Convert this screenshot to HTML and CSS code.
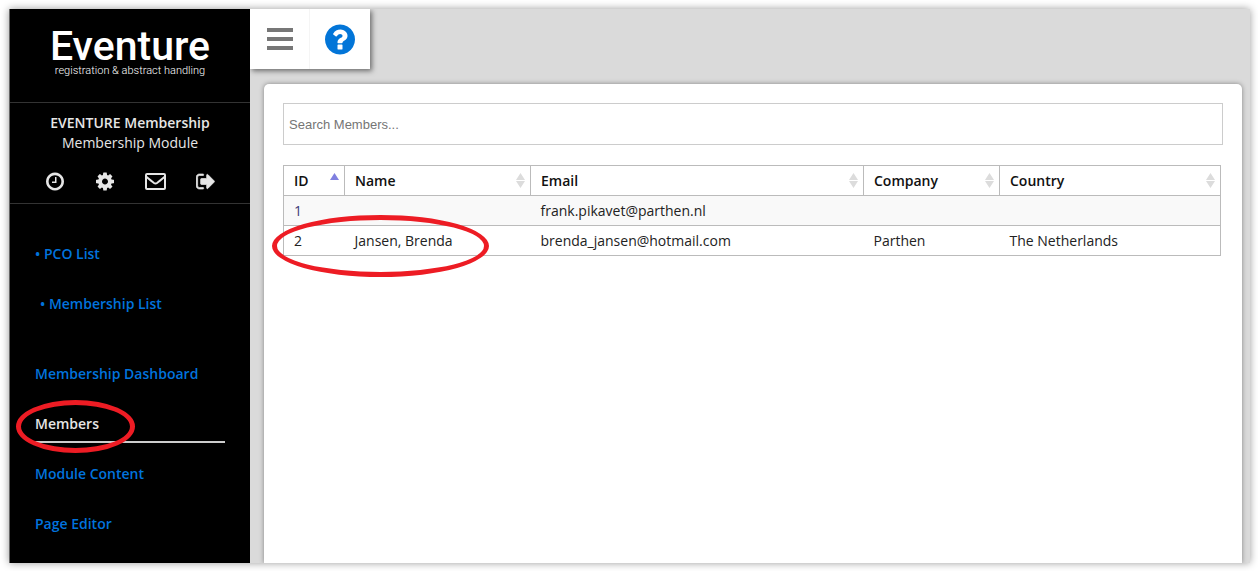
FILE: index.html
```html
<!DOCTYPE html>
<html lang="en">
<head>
  <meta charset="utf-8">
  <title>Eventure - Members</title>
  <link rel="stylesheet" href="styles.css">
</head>
<body>
  <div class="frame">
    <aside class="sidebar">
      <div class="logo">
        <span class="logo-name">Eventure</span>
        <span class="logo-sub">registration &amp; abstract handling</span>
      </div>
      <div class="account">
        <strong>EVENTURE Membership</strong>
        <span>Membership Module</span>
        <div class="account-icons">
          <button type="button" aria-label="History"><svg width="18" height="21" viewBox="0 0 1536 1792"><path d="M896 544v448q0 14-9 23t-23 9h-320q-14 0-23-9t-9-23v-64q0-14 9-23t23-9h224v-352q0-14 9-23t23-9h64q14 0 23 9t9 23zm416 352q0-148-73-273t-198-198-273-73-273 73-198 198-73 273 73 273 198 198 273 73 273-73 198-198 73-273zm224 0q0 209-103 385.5t-279.5 279.5-385.5 103-385.5-103-279.5-279.5-103-385.5 103-385.5 279.5-279.5 385.5-103 385.5 103 279.5 279.5 103 385.5z"/></svg></button>
          <button type="button" aria-label="Settings"><svg width="18" height="21" viewBox="0 0 1536 1792"><path d="M1024 896q0-106-75-181t-181-75-181 75-75 181 75 181 181 75 181-75 75-181zm512-109v222q0 12-8 23t-20 13l-185 28q-19 54-39 91 35 50 107 138 10 12 10 25t-9 23q-27 37-99 108t-94 71q-12 0-26-9l-138-108q-44 23-91 38-16 136-29 186-7 28-36 28h-222q-14 0-24.5-8.5t-11.5-21.5l-28-184q-49-16-90-37l-141 107q-10 9-25 9-14 0-25-11-126-114-165-168-7-10-7-23 0-12 8-23 15-21 51-66.5t54-70.5q-27-50-41-99l-183-27q-13-2-21-12.5t-8-23.5v-222q0-12 8-23t19-13l186-28q14-46 39-92-40-57-107-138-10-12-10-24 0-10 9-23 26-36 98.5-107.5t94.5-71.5q13 0 26 10l138 107q44-23 91-38 16-136 29-186 7-28 36-28h222q14 0 24.5 8.5t11.5 21.5l28 184q49 16 90 37l142-107q9-9 24-9 13 0 25 10 129 119 165 170 7 8 7 22 0 12-8 23-15 21-51 66.5t-54 70.5q26 50 41 98l183 28q13 2 21 12.5t8 23.5z"/></svg></button>
          <button type="button" aria-label="Messages"><svg class="line-icon" width="21" height="17" viewBox="0 0 21 17"><rect x="1" y="1" width="19" height="15" rx="1"/><path d="M1 3.5C4 6 7 8.500 9 10q1.500 1 3 0C14 8.500 17 6 20 3.500"/></svg></button>
          <button type="button" aria-label="Sign out"><svg class="sign-out" width="19" height="21" viewBox="0 0 1600 1792"><path d="M640 1440q0 4 1 20t.5 26.5-3 23.5-10 19.5-20.5 6.5h-320q-119 0-203.500-84.500t-84.500-203.500v-704q0-119 84.500-203.500t203.500-84.500h320q13 0 22.500 9.500t9.500 22.500q0 4 1 20t.5 26.500-3 23.500-10 19.500-20.500 6.500h-320q-66 0-113 47t-47 113v704q0 66 47 113t113 47h312l11.500 1 11.500 3 8 5.500 7 9 2 13.500zm928-544q0 26-19 45l-544 544q-19 19-45 19t-45-19-19-45v-288h-448q-26 0-45-19t-19-45v-384q0-26 19-45t45-19h448v-288q0-26 19-45t45-19 45 19l544 544q19 19 19 45z"/></svg></button>
        </div>
      </div>
      <nav class="menu">
        <a href="#">• PCO List</a>
        <a class="sub" href="#">• Membership List</a>
        <a href="#">Membership Dashboard</a>
        <a class="active" href="#">Members<span class="mark mark-menu"></span></a>
        <a href="#">Module Content</a>
        <a href="#">Page Editor</a>
      </nav>
    </aside>

    <main class="content">
      <div class="tools">
        <button type="button" aria-label="Toggle menu"><svg class="bars" width="26" height="22" viewBox="0 0 26 22"><path d="M0 0h26v4H0zM0 9h26v4H0zM0 18h26v4H0z"/></svg></button>
        <button type="button" aria-label="Help"><svg class="help" width="30" height="35" viewBox="0 0 1536 1792"><path d="M896 1376v-192q0-14-9-23t-23-9h-192q-14 0-23 9t-9 23v192q0 14 9 23t23 9h192q14 0 23-9t9-23zm256-672q0-88-55.500-163t-138.500-116-170-41q-243 0-371 213-15 24 8 42l132 100q7 6 19 6 16 0 25-12 53-68 86-92 34-24 86-24 48 0 85.500 26t37.500 59q0 38-20 61t-68 45q-63 28-115.500 86.500t-52.500 125.500v36q0 14 9 23t23 9h192q14 0 23-9t9-23q0-19 21.500-49.500t54.500-49.500q32-18 49-28.500t46-35 44.500-48 28-60.500 12.500-81zm384 192q0 209-103 385.500t-279.500 279.500-385.500 103-385.500-103-279.500-279.500-103-385.500 103-385.500 279.500-279.500 385.500-103 385.500 103 279.500 279.500 103 385.500z"/></svg></button>
      </div>

      <section class="panel">
        <input class="search" type="text" placeholder="Search Members..." aria-label="Search Members">
        <div class="table-wrap">
          <table class="members">
            <colgroup>
              <col class="col-id">
              <col class="col-name">
              <col class="col-email">
              <col class="col-company">
              <col>
            </colgroup>
            <thead>
              <tr>
                <th><button type="button">ID <svg class="asc" width="9" height="15" viewBox="0 0 9 15"><path d="M4.500 0L9 7H0z"/></svg></button></th>
                <th><button type="button">Name <svg width="9" height="15" viewBox="0 0 9 15"><path d="M4.500 0L9 7H0zM0 8h9L4.500 15z"/></svg></button></th>
                <th><button type="button">Email <svg width="9" height="15" viewBox="0 0 9 15"><path d="M4.500 0L9 7H0zM0 8h9L4.500 15z"/></svg></button></th>
                <th><button type="button">Company <svg width="9" height="15" viewBox="0 0 9 15"><path d="M4.500 0L9 7H0zM0 8h9L4.500 15z"/></svg></button></th>
                <th><button type="button">Country <svg width="9" height="15" viewBox="0 0 9 15"><path d="M4.500 0L9 7H0zM0 8h9L4.500 15z"/></svg></button></th>
              </tr>
            </thead>
            <tbody>
              <tr>
                <td class="visited">1</td>
                <td></td>
                <td>frank.pikavet@parthen.nl</td>
                <td></td>
                <td></td>
              </tr>
              <tr>
                <td>2<span class="mark mark-row"></span></td>
                <td>Jansen, Brenda</td>
                <td>brenda_jansen@hotmail.com</td>
                <td>Parthen</td>
                <td>The Netherlands</td>
              </tr>
            </tbody>
          </table>
        </div>
      </section>
    </main>
  </div>
</body>
</html>
```
FILE: styles.css
```css
* {
  box-sizing: border-box;
}
body {
  margin: 0;
  height: 100vh;
  padding: 9px 8px 8px 9px;
  overflow: hidden;
  background: #fff;
  font-family: "Open Sans", "Noto Sans", sans-serif;
  font-size: 14px;
  line-height: 20px;
}
button {
  border: 0;
  padding: 0;
  background: none;
  font: inherit;
  color: inherit;
  cursor: pointer;
}
.frame {
  display: flex;
  height: 100%;
  box-shadow: 0 0 8px rgba(0, 0, 0, 0.4);
}

/* sidebar */
.sidebar {
  flex: none;
  width: 241px;
  background: #000;
  border-left: 1px solid #666;
  color: #e6e6e6;
}
.logo {
  display: flex;
  flex-direction: column;
  align-items: center;
  height: 94px;
  padding-top: 18px;
  border-bottom: 1px solid #333;
  font-family: Roboto, sans-serif;
  color: #fff;
}
.logo-name {
  font-size: 41px;
  font-weight: 500;
  line-height: 38px;
}
.logo-sub {
  font-size: 11px;
  font-weight: 300;
  line-height: 12px;
}
.account {
  display: flex;
  flex-direction: column;
  align-items: center;
  height: 101px;
  padding-top: 10px;
  border-bottom: 1px solid #333;
}
.account strong {
  font-weight: 600;
}
.account-icons {
  display: flex;
  margin-top: 13px;
}
.account-icons button {
  display: flex;
  align-items: center;
  justify-content: center;
  width: 50px;
  height: 30px;
}
.account-icons svg {
  fill: #e6e6e6;
}
.account-icons .line-icon {
  fill: none;
  stroke: #e6e6e6;
  stroke-width: 2;
}
.account-icons .sign-out {
  stroke: #e6e6e6;
  stroke-width: 60;
}
.menu {
  display: flex;
  flex-direction: column;
  gap: 14px;
  padding: 33px 25px 0;
}
.menu a {
  position: relative;
  padding: 7px 0;
  border-bottom: 2px solid transparent;
  color: #0073dd;
  font-weight: 600;
  text-decoration: none;
}
.menu .sub {
  margin: 0 0 20px 5px;
}
.menu .active {
  color: #e6e6e6;
  border-color: #ccc;
}

/* red rings round the highlighted items */
.mark {
  position: absolute;
  border: 5px solid #ed1c24;
  border-radius: 50%;
  pointer-events: none;
}
.mark-menu {
  left: -19px;
  top: -7px;
  width: 119px;
  height: 53px;
}
.mark-row {
  left: -12px;
  top: -11px;
  width: 217px;
  height: 62px;
}

/* content */
.content {
  flex: 1;
  min-width: 0;
  display: flex;
  flex-direction: column;
  align-items: flex-start;
  background: #dadada;
}
.tools {
  display: flex;
  background: #fff;
  box-shadow: 2px 2px 5px rgba(0, 0, 0, 0.5);
  clip-path: inset(0 -8px -8px 0);
}
.tools button {
  display: flex;
  align-items: center;
  justify-content: center;
  width: 60px;
  height: 60px;
}
.tools button:first-child {
  box-shadow: inset -1px 0 #f5f5f5;
}
.bars {
  fill: #777;
}
.help {
  fill: #0275d8;
}
.panel {
  flex: 1;
  align-self: stretch;
  margin: 15px 8px 0 14px;
  padding: 19px;
  background: #fff;
  border-radius: 5px 5px 0 0;
  box-shadow: 0 0 5px rgba(0, 0, 0, 0.4);
  clip-path: inset(-8px -8px 0);
}
.search {
  display: block;
  width: 100%;
  height: 42px;
  padding: 0 5px;
  border: 1px solid #ccc;
  font-family: "Liberation Sans", Arial, sans-serif;
  font-size: 13px;
}
.search::placeholder {
  color: #757575;
}
.table-wrap {
  padding: 20px 2px 0 0;
}
.members {
  width: 100%;
  table-layout: fixed;
  border-collapse: collapse;
  border: 1px solid #bbb;
  color: #222;
}
.col-id {
  width: 61px;
}
.col-name {
  width: 186px;
}
.col-email {
  width: 333px;
}
.col-company {
  width: 136px;
}
.members th {
  padding: 0;
  border: 1px solid #bbb;
  color: #111;
  font-weight: 600;
}
.members th button {
  display: flex;
  align-items: center;
  justify-content: space-between;
  width: 100%;
  height: 29px;
  padding: 0 5px 0 10px;
}
.members th svg {
  fill: #dcdcdc;
}
.members th .asc {
  fill: #8080e0;
}
.members td {
  position: relative;
  height: 30px;
  padding: 0 10px;
  border-bottom: 1px solid #bbb;
}
.members tbody tr:first-child {
  background: #f9f9f9;
}
.members .visited {
  color: #3c3c78;
}
```
